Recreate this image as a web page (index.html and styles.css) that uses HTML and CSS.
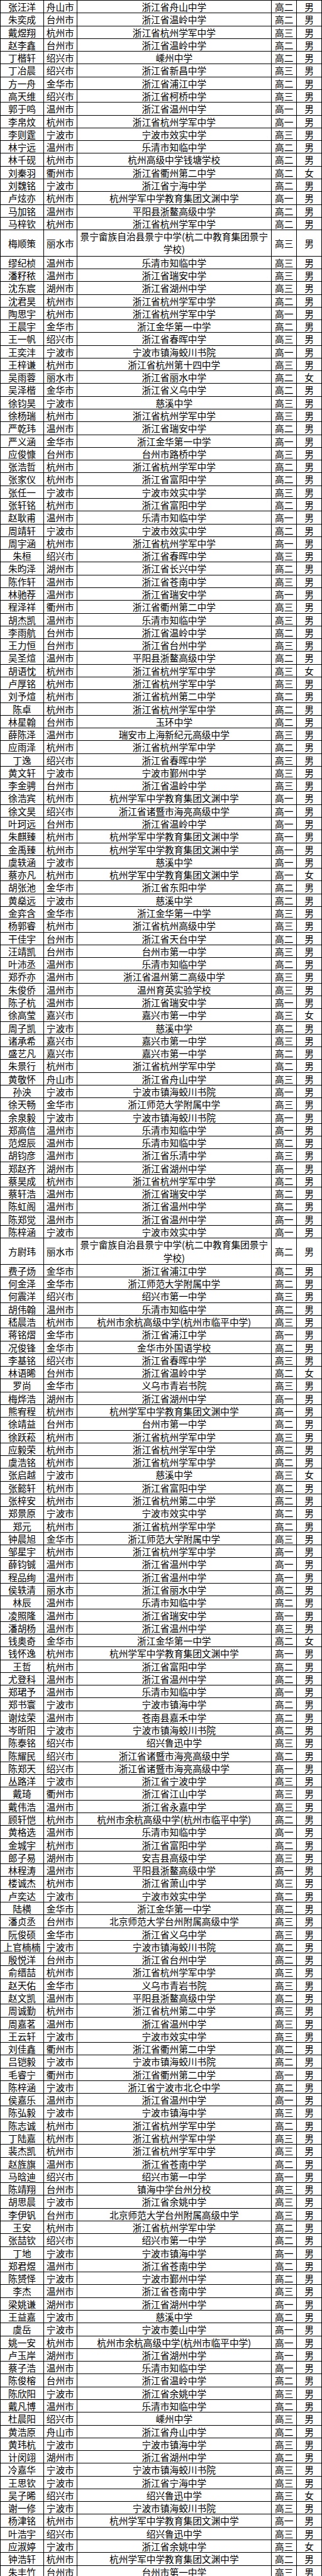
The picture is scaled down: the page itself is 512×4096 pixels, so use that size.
FILE: index.html
```html
<!DOCTYPE html>
<html lang="zh-CN">
<head>
<meta charset="utf-8">
<title>名单</title>
<link rel="stylesheet" href="styles.css">
</head>
<body>
<table class="roster">
<colgroup><col class="c-name"><col class="c-city"><col class="c-school"><col class="c-grade"><col class="c-sex"></colgroup>
<tbody>
<tr><td>张汪洋</td><td>舟山市</td><td>浙江省舟山中学</td><td>高二</td><td>男</td></tr>
<tr><td>朱奕成</td><td>台州市</td><td>浙江省温岭中学</td><td>高二</td><td>男</td></tr>
<tr><td>戴煜翔</td><td>杭州市</td><td>浙江省杭州学军中学</td><td>高三</td><td>男</td></tr>
<tr><td>赵李鑫</td><td>台州市</td><td>浙江省温岭中学</td><td>高二</td><td>男</td></tr>
<tr><td>丁楷轩</td><td>绍兴市</td><td>嵊州中学</td><td>高二</td><td>男</td></tr>
<tr><td>丁冶晨</td><td>绍兴市</td><td>浙江省新昌中学</td><td>高三</td><td>男</td></tr>
<tr><td>方一舟</td><td>金华市</td><td>浙江省浦江中学</td><td>高二</td><td>男</td></tr>
<tr><td>高天维</td><td>绍兴市</td><td>浙江省柯桥中学</td><td>高三</td><td>男</td></tr>
<tr><td>郭于鸣</td><td>温州市</td><td>浙江省温州中学</td><td>高一</td><td>男</td></tr>
<tr><td>李帛炆</td><td>杭州市</td><td>浙江省杭州学军中学</td><td>高一</td><td>男</td></tr>
<tr><td>李则霆</td><td>宁波市</td><td>宁波市效实中学</td><td>高三</td><td>男</td></tr>
<tr><td>林宁远</td><td>温州市</td><td>乐清市知临中学</td><td>高二</td><td>男</td></tr>
<tr><td>林千砚</td><td>杭州市</td><td>杭州高级中学钱塘学校</td><td>高二</td><td>男</td></tr>
<tr><td>刘秦羽</td><td>衢州市</td><td>浙江省衢州第二中学</td><td>高二</td><td>女</td></tr>
<tr><td>刘魏铭</td><td>宁波市</td><td>浙江省宁海中学</td><td>高二</td><td>男</td></tr>
<tr><td>卢炫亦</td><td>杭州市</td><td>杭州学军中学教育集团文渊中学</td><td>高一</td><td>男</td></tr>
<tr><td>马加铭</td><td>温州市</td><td>平阳县浙鳌高级中学</td><td>高二</td><td>男</td></tr>
<tr><td>马梓钦</td><td>杭州市</td><td>浙江省杭州学军中学</td><td>高二</td><td>男</td></tr>
<tr class="tall"><td>梅顺策</td><td>丽水市</td><td class="wrap">景宁畲族自治县景宁中学(杭二中教育集团景宁<br>学校)</td><td>高三</td><td>男</td></tr>
<tr><td>缪纪桢</td><td>温州市</td><td>乐清市知临中学</td><td>高三</td><td>男</td></tr>
<tr><td>潘籽秾</td><td>温州市</td><td>浙江省瑞安中学</td><td>高三</td><td>男</td></tr>
<tr><td>沈东宸</td><td>湖州市</td><td>浙江省湖州中学</td><td>高三</td><td>男</td></tr>
<tr><td>沈君昊</td><td>杭州市</td><td>浙江省杭州学军中学</td><td>高二</td><td>男</td></tr>
<tr><td>陶思宇</td><td>杭州市</td><td>浙江省杭州学军中学</td><td>高一</td><td>男</td></tr>
<tr><td>王晨宇</td><td>金华市</td><td>浙江金华第一中学</td><td>高二</td><td>男</td></tr>
<tr><td>王一帆</td><td>绍兴市</td><td>浙江省春晖中学</td><td>高三</td><td>男</td></tr>
<tr><td>王奕沣</td><td>宁波市</td><td>宁波市镇海蛟川书院</td><td>高一</td><td>男</td></tr>
<tr><td>王梓谦</td><td>杭州市</td><td>浙江省杭州第十四中学</td><td>高三</td><td>男</td></tr>
<tr><td>吴雨蓉</td><td>丽水市</td><td>浙江省丽水中学</td><td>高二</td><td>女</td></tr>
<tr><td>吴泽楷</td><td>金华市</td><td>浙江省义乌中学</td><td>高二</td><td>男</td></tr>
<tr><td>徐钧昊</td><td>宁波市</td><td>慈溪中学</td><td>高三</td><td>男</td></tr>
<tr><td>徐杨瑞</td><td>杭州市</td><td>浙江省杭州学军中学</td><td>高三</td><td>男</td></tr>
<tr><td>严乾玮</td><td>温州市</td><td>浙江省瑞安中学</td><td>高二</td><td>男</td></tr>
<tr><td>严义涵</td><td>金华市</td><td>浙江金华第一中学</td><td>高一</td><td>男</td></tr>
<tr><td>应俊慷</td><td>台州市</td><td>台州市路桥中学</td><td>高三</td><td>男</td></tr>
<tr><td>张浩哲</td><td>杭州市</td><td>浙江省杭州学军中学</td><td>高二</td><td>男</td></tr>
<tr><td>张家仪</td><td>杭州市</td><td>浙江省富阳中学</td><td>高二</td><td>男</td></tr>
<tr><td>张任一</td><td>宁波市</td><td>宁波市效实中学</td><td>高三</td><td>男</td></tr>
<tr><td>张轩铭</td><td>杭州市</td><td>浙江省富阳中学</td><td>高二</td><td>男</td></tr>
<tr><td>赵耿甫</td><td>温州市</td><td>乐清市知临中学</td><td>高一</td><td>男</td></tr>
<tr><td>周靖轩</td><td>宁波市</td><td>宁波市效实中学</td><td>高二</td><td>男</td></tr>
<tr><td>周宇涵</td><td>杭州市</td><td>浙江省杭州学军中学</td><td>高一</td><td>男</td></tr>
<tr><td>朱桓</td><td>绍兴市</td><td>浙江省春晖中学</td><td>高三</td><td>男</td></tr>
<tr><td>朱昀泽</td><td>湖州市</td><td>浙江省长兴中学</td><td>高二</td><td>男</td></tr>
<tr><td>陈作轩</td><td>温州市</td><td>浙江省苍南中学</td><td>高三</td><td>男</td></tr>
<tr><td>林驰荐</td><td>温州市</td><td>浙江省瑞安中学</td><td>高一</td><td>男</td></tr>
<tr><td>程泽祥</td><td>衢州市</td><td>浙江省衢州第二中学</td><td>高三</td><td>男</td></tr>
<tr><td>胡杰凯</td><td>温州市</td><td>乐清市知临中学</td><td>高三</td><td>男</td></tr>
<tr><td>李雨航</td><td>台州市</td><td>浙江省温岭中学</td><td>高二</td><td>男</td></tr>
<tr><td>王力恒</td><td>台州市</td><td>浙江省台州中学</td><td>高三</td><td>男</td></tr>
<tr><td>吴圣煊</td><td>温州市</td><td>平阳县浙鳌高级中学</td><td>高二</td><td>男</td></tr>
<tr><td>胡语忱</td><td>杭州市</td><td>浙江省杭州学军中学</td><td>高三</td><td>女</td></tr>
<tr><td>卢厚铭</td><td>杭州市</td><td>浙江省杭州学军中学</td><td>高三</td><td>男</td></tr>
<tr><td>刘予煊</td><td>杭州市</td><td>浙江省杭州第二中学</td><td>高二</td><td>男</td></tr>
<tr><td>陈卓</td><td>杭州市</td><td>浙江省杭州学军中学</td><td>高二</td><td>男</td></tr>
<tr><td>林星翰</td><td>台州市</td><td>玉环中学</td><td>高二</td><td>男</td></tr>
<tr><td>薛陈泽</td><td>温州市</td><td>瑞安市上海新纪元高级中学</td><td>高三</td><td>男</td></tr>
<tr><td>应雨泽</td><td>杭州市</td><td>浙江省杭州学军中学</td><td>高二</td><td>男</td></tr>
<tr><td>丁逸</td><td>绍兴市</td><td>浙江省春晖中学</td><td>高三</td><td>男</td></tr>
<tr><td>黄文轩</td><td>宁波市</td><td>宁波市鄞州中学</td><td>高三</td><td>男</td></tr>
<tr><td>李金骋</td><td>台州市</td><td>浙江省温岭中学</td><td>高三</td><td>男</td></tr>
<tr><td>徐浩宾</td><td>杭州市</td><td>杭州学军中学教育集团文渊中学</td><td>高一</td><td>男</td></tr>
<tr><td>徐文昊</td><td>绍兴市</td><td>浙江省诸暨市海亮高级中学</td><td>高一</td><td>男</td></tr>
<tr><td>叶珂远</td><td>台州市</td><td>浙江省温岭中学</td><td>高一</td><td>男</td></tr>
<tr><td>朱麒臻</td><td>杭州市</td><td>杭州学军中学教育集团文渊中学</td><td>高一</td><td>男</td></tr>
<tr><td>金禹臻</td><td>杭州市</td><td>杭州学军中学教育集团文渊中学</td><td>高一</td><td>男</td></tr>
<tr><td>虞轶涵</td><td>宁波市</td><td>慈溪中学</td><td>高一</td><td>男</td></tr>
<tr><td>蔡亦凡</td><td>杭州市</td><td>杭州学军中学教育集团文渊中学</td><td>高一</td><td>女</td></tr>
<tr><td>胡张池</td><td>金华市</td><td>浙江省东阳中学</td><td>高二</td><td>男</td></tr>
<tr><td>黄燊远</td><td>宁波市</td><td>慈溪中学</td><td>高二</td><td>男</td></tr>
<tr><td>金弈含</td><td>金华市</td><td>浙江金华第一中学</td><td>高三</td><td>男</td></tr>
<tr><td>杨郭睿</td><td>杭州市</td><td>浙江省杭州高级中学</td><td>高三</td><td>男</td></tr>
<tr><td>干佳宇</td><td>台州市</td><td>浙江省天台中学</td><td>高二</td><td>男</td></tr>
<tr><td>汪靖凯</td><td>台州市</td><td>台州市第一中学</td><td>高三</td><td>男</td></tr>
<tr><td>叶沛丞</td><td>温州市</td><td>乐清市知临中学</td><td>高二</td><td>男</td></tr>
<tr><td>郑乔亦</td><td>温州市</td><td>浙江省温州第二高级中学</td><td>高三</td><td>男</td></tr>
<tr><td>朱俊侨</td><td>温州市</td><td>温州育英实验学校</td><td>高三</td><td>男</td></tr>
<tr><td>陈子杭</td><td>温州市</td><td>浙江省瑞安中学</td><td>高一</td><td>男</td></tr>
<tr><td>徐高莹</td><td>嘉兴市</td><td>嘉兴市第一中学</td><td>高三</td><td>女</td></tr>
<tr><td>周子凯</td><td>宁波市</td><td>慈溪中学</td><td>高二</td><td>男</td></tr>
<tr><td>诸承希</td><td>嘉兴市</td><td>嘉兴市第一中学</td><td>高三</td><td>男</td></tr>
<tr><td>盛艺凡</td><td>嘉兴市</td><td>嘉兴市第一中学</td><td>高二</td><td>男</td></tr>
<tr><td>朱景行</td><td>杭州市</td><td>浙江省杭州学军中学</td><td>高二</td><td>男</td></tr>
<tr><td>黄敬怀</td><td>舟山市</td><td>浙江省舟山中学</td><td>高三</td><td>男</td></tr>
<tr><td>孙泱</td><td>宁波市</td><td>宁波市镇海蛟川书院</td><td>高一</td><td>男</td></tr>
<tr><td>徐天畅</td><td>金华市</td><td>浙江师范大学附属中学</td><td>高三</td><td>男</td></tr>
<tr><td>余泉毅</td><td>宁波市</td><td>宁波市镇海蛟川书院</td><td>高一</td><td>男</td></tr>
<tr><td>郑高信</td><td>温州市</td><td>乐清市知临中学</td><td>高一</td><td>男</td></tr>
<tr><td>范煜辰</td><td>温州市</td><td>乐清市知临中学</td><td>高二</td><td>男</td></tr>
<tr><td>胡钧彦</td><td>温州市</td><td>浙江省乐清中学</td><td>高三</td><td>男</td></tr>
<tr><td>郑赵齐</td><td>湖州市</td><td>浙江省湖州中学</td><td>高一</td><td>男</td></tr>
<tr><td>蔡昊成</td><td>杭州市</td><td>浙江省杭州学军中学</td><td>高二</td><td>男</td></tr>
<tr><td>蔡轩浩</td><td>温州市</td><td>浙江省瑞安中学</td><td>高二</td><td>男</td></tr>
<tr><td>陈虹阁</td><td>温州市</td><td>浙江省温州中学</td><td>高二</td><td>男</td></tr>
<tr><td>陈郑觉</td><td>温州市</td><td>浙江省温州中学</td><td>高一</td><td>男</td></tr>
<tr><td>陈梓涵</td><td>宁波市</td><td>宁波市效实中学</td><td>高一</td><td>男</td></tr>
<tr class="tall"><td>方尉玮</td><td>丽水市</td><td class="wrap">景宁畲族自治县景宁中学(杭二中教育集团景宁<br>学校)</td><td>高二</td><td>男</td></tr>
<tr><td>费子炀</td><td>金华市</td><td>浙江省浦江中学</td><td>高二</td><td>男</td></tr>
<tr><td>何金泽</td><td>金华市</td><td>浙江师范大学附属中学</td><td>高二</td><td>男</td></tr>
<tr><td>何震洋</td><td>绍兴市</td><td>绍兴市第一中学</td><td>高三</td><td>男</td></tr>
<tr><td>胡伟翰</td><td>温州市</td><td>乐清市知临中学</td><td>高二</td><td>男</td></tr>
<tr><td>嵇晨浩</td><td>杭州市</td><td>杭州市余杭高级中学(杭州市临平中学)</td><td>高三</td><td>男</td></tr>
<tr><td>蒋铭熠</td><td>金华市</td><td>浙江省浦江中学</td><td>高一</td><td>男</td></tr>
<tr><td>况俊锋</td><td>金华市</td><td>金华市外国语学校</td><td>高二</td><td>男</td></tr>
<tr><td>李基铭</td><td>绍兴市</td><td>浙江省春晖中学</td><td>高三</td><td>男</td></tr>
<tr><td>林语晞</td><td>台州市</td><td>浙江省温岭中学</td><td>高二</td><td>女</td></tr>
<tr><td>罗尚</td><td>金华市</td><td>义乌市青岩书院</td><td>高三</td><td>男</td></tr>
<tr><td>梅烨浩</td><td>湖州市</td><td>浙江省湖州中学</td><td>高一</td><td>男</td></tr>
<tr><td>熊宥程</td><td>杭州市</td><td>杭州学军中学教育集团文渊中学</td><td>高一</td><td>男</td></tr>
<tr><td>徐靖益</td><td>台州市</td><td>台州市第一中学</td><td>高二</td><td>男</td></tr>
<tr><td>徐跃菘</td><td>杭州市</td><td>浙江省杭州学军中学</td><td>高三</td><td>男</td></tr>
<tr><td>应毅荣</td><td>杭州市</td><td>浙江省杭州学军中学</td><td>高二</td><td>男</td></tr>
<tr><td>虞浩铭</td><td>杭州市</td><td>浙江省杭州学军中学</td><td>高二</td><td>男</td></tr>
<tr><td>张启越</td><td>宁波市</td><td>慈溪中学</td><td>高三</td><td>女</td></tr>
<tr><td>张懿轩</td><td>杭州市</td><td>浙江省富阳中学</td><td>高二</td><td>男</td></tr>
<tr><td>张梓安</td><td>杭州市</td><td>浙江省杭州第二中学</td><td>高二</td><td>男</td></tr>
<tr><td>郑景原</td><td>宁波市</td><td>宁波市效实中学</td><td>高二</td><td>男</td></tr>
<tr><td>郑元</td><td>杭州市</td><td>浙江省杭州学军中学</td><td>高二</td><td>男</td></tr>
<tr><td>钟晨旭</td><td>金华市</td><td>浙江师范大学附属中学</td><td>高三</td><td>男</td></tr>
<tr><td>邹星宇</td><td>杭州市</td><td>浙江省杭州学军中学</td><td>高一</td><td>男</td></tr>
<tr><td>薛钧铖</td><td>温州市</td><td>浙江省温州中学</td><td>高一</td><td>男</td></tr>
<tr><td>程品绚</td><td>温州市</td><td>浙江省温州中学</td><td>高一</td><td>男</td></tr>
<tr><td>侯轶清</td><td>丽水市</td><td>浙江省丽水中学</td><td>高二</td><td>男</td></tr>
<tr><td>林辰</td><td>温州市</td><td>乐清市知临中学</td><td>高二</td><td>男</td></tr>
<tr><td>凌照隆</td><td>温州市</td><td>浙江省瑞安中学</td><td>高一</td><td>男</td></tr>
<tr><td>潘胡杨</td><td>温州市</td><td>浙江省温州中学</td><td>高三</td><td>男</td></tr>
<tr><td>钱奥奇</td><td>金华市</td><td>浙江金华第一中学</td><td>高二</td><td>女</td></tr>
<tr><td>钱怀逸</td><td>杭州市</td><td>杭州学军中学教育集团文渊中学</td><td>高一</td><td>男</td></tr>
<tr><td>王哲</td><td>杭州市</td><td>浙江省富阳中学</td><td>高二</td><td>男</td></tr>
<tr><td>尤登科</td><td>温州市</td><td>浙江省温州中学</td><td>高二</td><td>男</td></tr>
<tr><td>郑珺予</td><td>温州市</td><td>乐清市知临中学</td><td>高一</td><td>男</td></tr>
<tr><td>郑书寰</td><td>宁波市</td><td>宁波市镇海中学</td><td>高二</td><td>男</td></tr>
<tr><td>谢炫荣</td><td>温州市</td><td>苍南县嘉禾中学</td><td>高二</td><td>男</td></tr>
<tr><td>岑昕阳</td><td>宁波市</td><td>宁波市镇海蛟川书院</td><td>高二</td><td>男</td></tr>
<tr><td>陈泰铭</td><td>绍兴市</td><td>绍兴鲁迅中学</td><td>高三</td><td>男</td></tr>
<tr><td>陈耀民</td><td>绍兴市</td><td>浙江省诸暨市海亮高级中学</td><td>高二</td><td>男</td></tr>
<tr><td>陈郑天</td><td>绍兴市</td><td>浙江省诸暨市海亮高级中学</td><td>高一</td><td>男</td></tr>
<tr><td>丛路洋</td><td>宁波市</td><td>浙江省宁波中学</td><td>高三</td><td>男</td></tr>
<tr><td>戴琦</td><td>衢州市</td><td>浙江省江山中学</td><td>高三</td><td>男</td></tr>
<tr><td>戴伟浩</td><td>温州市</td><td>浙江省永嘉中学</td><td>高三</td><td>男</td></tr>
<tr><td>顾轩恺</td><td>杭州市</td><td>杭州市余杭高级中学(杭州市临平中学)</td><td>高二</td><td>男</td></tr>
<tr><td>黄格选</td><td>温州市</td><td>乐清市知临中学</td><td>高一</td><td>男</td></tr>
<tr><td>金城宇</td><td>杭州市</td><td>浙江省富阳中学</td><td>高二</td><td>男</td></tr>
<tr><td>郎子易</td><td>湖州市</td><td>安吉县高级中学</td><td>高三</td><td>男</td></tr>
<tr><td>林程涛</td><td>温州市</td><td>平阳县浙鳌高级中学</td><td>高一</td><td>男</td></tr>
<tr><td>楼诚杰</td><td>杭州市</td><td>浙江省萧山中学</td><td>高三</td><td>男</td></tr>
<tr><td>卢奕达</td><td>宁波市</td><td>宁波市效实中学</td><td>高二</td><td>男</td></tr>
<tr><td>陆横</td><td>金华市</td><td>浙江金华第一中学</td><td>高二</td><td>男</td></tr>
<tr><td>潘贞丞</td><td>台州市</td><td>北京师范大学台州附属高级中学</td><td>高三</td><td>男</td></tr>
<tr><td>阮俊硕</td><td>金华市</td><td>浙江省义乌中学</td><td>高三</td><td>男</td></tr>
<tr><td>上官楠楠</td><td>宁波市</td><td>宁波市镇海蛟川书院</td><td>高二</td><td>男</td></tr>
<tr><td>殷悦洋</td><td>台州市</td><td>浙江省台州中学</td><td>高二</td><td>男</td></tr>
<tr><td>俞缙喆</td><td>杭州市</td><td>浙江省杭州学军中学</td><td>高三</td><td>男</td></tr>
<tr><td>赵天佑</td><td>金华市</td><td>义乌市青岩书院</td><td>高三</td><td>男</td></tr>
<tr><td>赵文凯</td><td>温州市</td><td>平阳县浙鳌高级中学</td><td>高二</td><td>男</td></tr>
<tr><td>周诚勤</td><td>杭州市</td><td>浙江省杭州第二中学</td><td>高三</td><td>男</td></tr>
<tr><td>周嘉茗</td><td>温州市</td><td>浙江省温州中学</td><td>高三</td><td>男</td></tr>
<tr><td>王云轩</td><td>宁波市</td><td>宁波市效实中学</td><td>高三</td><td>男</td></tr>
<tr><td>刘佳鑫</td><td>衢州市</td><td>浙江省衢州第二中学</td><td>高二</td><td>男</td></tr>
<tr><td>吕铠毅</td><td>宁波市</td><td>宁波市镇海蛟川书院</td><td>高二</td><td>男</td></tr>
<tr><td>毛睿宁</td><td>衢州市</td><td>浙江省衢州第二中学</td><td>高一</td><td>男</td></tr>
<tr><td>陈梓涵</td><td>宁波市</td><td>浙江省宁波市北仑中学</td><td>高二</td><td>男</td></tr>
<tr><td>侯嘉乐</td><td>温州市</td><td>浙江省温州中学</td><td>高一</td><td>男</td></tr>
<tr><td>陈弘毅</td><td>宁波市</td><td>宁波市镇海中学</td><td>高三</td><td>男</td></tr>
<tr><td>陈志诚</td><td>杭州市</td><td>浙江省杭州学军中学</td><td>高二</td><td>男</td></tr>
<tr><td>丁陆嘉</td><td>杭州市</td><td>浙江省杭州学军中学</td><td>高三</td><td>男</td></tr>
<tr><td>裴杰凯</td><td>杭州市</td><td>浙江省杭州学军中学</td><td>高三</td><td>男</td></tr>
<tr><td>赵旌旗</td><td>温州市</td><td>浙江省苍南中学</td><td>高二</td><td>男</td></tr>
<tr><td>马晗迪</td><td>绍兴市</td><td>绍兴市第一中学</td><td>高一</td><td>男</td></tr>
<tr><td>陈靖翔</td><td>台州市</td><td>镇海中学台州分校</td><td>高三</td><td>男</td></tr>
<tr><td>胡思晨</td><td>宁波市</td><td>浙江省余姚中学</td><td>高三</td><td>男</td></tr>
<tr><td>李伊钒</td><td>台州市</td><td>北京师范大学台州附属高级中学</td><td>高三</td><td>男</td></tr>
<tr><td>王安</td><td>杭州市</td><td>浙江省杭州学军中学</td><td>高二</td><td>男</td></tr>
<tr><td>张喆钦</td><td>绍兴市</td><td>绍兴市第一中学</td><td>高二</td><td>男</td></tr>
<tr><td>丁地</td><td>宁波市</td><td>宁波市镇海中学</td><td>高一</td><td>男</td></tr>
<tr><td>郑君煜</td><td>温州市</td><td>浙江省苍南中学</td><td>高二</td><td>男</td></tr>
<tr><td>陈赟怿</td><td>宁波市</td><td>宁波市鄞州中学</td><td>高二</td><td>男</td></tr>
<tr><td>李杰</td><td>温州市</td><td>浙江省苍南中学</td><td>高三</td><td>男</td></tr>
<tr><td>梁姚谦</td><td>湖州市</td><td>浙江省湖州中学</td><td>高一</td><td>男</td></tr>
<tr><td>王益嘉</td><td>宁波市</td><td>慈溪中学</td><td>高二</td><td>男</td></tr>
<tr><td>虞岳</td><td>宁波市</td><td>宁波市姜山中学</td><td>高一</td><td>男</td></tr>
<tr><td>姚一安</td><td>杭州市</td><td>杭州市余杭高级中学(杭州市临平中学)</td><td>高一</td><td>男</td></tr>
<tr><td>卢玉岸</td><td>湖州市</td><td>浙江省湖州中学</td><td>高一</td><td>男</td></tr>
<tr><td>蔡子浩</td><td>温州市</td><td>乐清市知临中学</td><td>高一</td><td>男</td></tr>
<tr><td>陈俊榕</td><td>台州市</td><td>浙江省温岭中学</td><td>高二</td><td>男</td></tr>
<tr><td>陈欣阳</td><td>宁波市</td><td>浙江省余姚中学</td><td>高三</td><td>男</td></tr>
<tr><td>戴凡博</td><td>温州市</td><td>乐清市知临中学</td><td>高二</td><td>男</td></tr>
<tr><td>杜晨阳</td><td>绍兴市</td><td>嵊州中学</td><td>高三</td><td>男</td></tr>
<tr><td>黄浩原</td><td>舟山市</td><td>浙江省舟山中学</td><td>高二</td><td>男</td></tr>
<tr><td>黄玮杭</td><td>宁波市</td><td>宁波市镇海中学</td><td>高三</td><td>男</td></tr>
<tr><td>计闵翊</td><td>湖州市</td><td>浙江省湖州中学</td><td>高二</td><td>男</td></tr>
<tr><td>冷嘉华</td><td>宁波市</td><td>宁波市镇海蛟川书院</td><td>高三</td><td>男</td></tr>
<tr><td>王思钦</td><td>宁波市</td><td>浙江省宁海中学</td><td>高三</td><td>男</td></tr>
<tr><td>吴子晞</td><td>绍兴市</td><td>绍兴鲁迅中学</td><td>高三</td><td>女</td></tr>
<tr><td>谢一修</td><td>宁波市</td><td>宁波市镇海蛟川书院</td><td>高三</td><td>男</td></tr>
<tr><td>杨津铭</td><td>杭州市</td><td>杭州学军中学教育集团文渊中学</td><td>高一</td><td>男</td></tr>
<tr><td>叶浩宇</td><td>绍兴市</td><td>绍兴鲁迅中学</td><td>高三</td><td>男</td></tr>
<tr><td>应淑婷</td><td>宁波市</td><td>浙江省余姚中学</td><td>高三</td><td>女</td></tr>
<tr><td>钟浩轩</td><td>杭州市</td><td>杭州学军中学教育集团文渊中学</td><td>高二</td><td>男</td></tr>
<tr><td>朱丰竹</td><td>台州市</td><td>台州市第一中学</td><td>高三</td><td>男</td></tr>
</tbody>
</table>
</body>
</html>
```

FILE: styles.css
```css
html, body {
  margin: 0;
  padding: 0;
  background: #fff;
}

.roster {
  border-collapse: collapse;
  table-layout: fixed;
  width: 511px;
  font-family: "Noto Sans CJK SC", "Noto Sans", sans-serif;
  font-size: 14.7px;
  color: #000;
}

.c-name { width: 69px; }
.c-city { width: 52.5px; }
.c-school { width: 309.6px; }
.c-grade { width: 40.1px; }
.c-sex { width: 39.8px; }

.roster td {
  border: 1px solid #000;
  padding: 0 1px;
  height: 19.28px;
  line-height: 19.28px;
  text-align: center;
  vertical-align: middle;
  white-space: nowrap;
  overflow: hidden;
}

.roster tr.tall td {
  height: 39.56px;
}

.roster td.wrap {
  white-space: normal;
  line-height: 20.3px;
}
```
